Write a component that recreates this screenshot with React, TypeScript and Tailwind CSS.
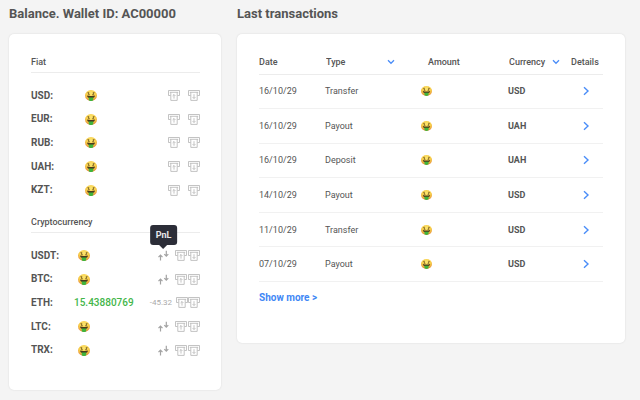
import React from "react";

type Transaction = {
  date: string;
  type: string;
  currency: string;
};

type CryptoBalance = {
  code: string;
  amount?: string;
  pnl?: string;
};

const fiat = ["USD", "EUR", "RUB", "UAH", "KZT"];

const crypto: CryptoBalance[] = [
  { code: "USDT" },
  { code: "BTC" },
  { code: "ETH", amount: "15.43880769", pnl: "-45.32" },
  { code: "LTC" },
  { code: "TRX" },
];

const transactions: Transaction[] = [
  { date: "16/10/29", type: "Transfer", currency: "USD" },
  { date: "16/10/29", type: "Payout", currency: "UAH" },
  { date: "16/10/29", type: "Deposit", currency: "UAH" },
  { date: "14/10/29", type: "Payout", currency: "USD" },
  { date: "11/10/29", type: "Transfer", currency: "USD" },
  { date: "07/10/29", type: "Payout", currency: "USD" },
];

function MoneyFace({ className }: { className: string }) {
  return (
    <svg viewBox="0 0 24 22" preserveAspectRatio="none" className={className} role="img" aria-label="Hidden amount">
      <defs>
        <radialGradient id="face" cx="0.5" cy="0.3" r="0.7">
          <stop offset="0" stopColor="#fbe672" />
          <stop offset="0.6" stopColor="#f7cb45" />
          <stop offset="1" stopColor="#e58a3c" />
        </radialGradient>
      </defs>
      <ellipse cx="12" cy="11" rx="12" ry="10.800" fill="url(#face)" />
      <path d="M5.500 4.500c0 3.500 3.500 2.500 3.500 6M7.300 4v7" fill="none" stroke="#7d6526" strokeWidth="1.600" />
      <path d="M18.500 4.500c0 3.500-3.500 2.500-3.500 6M16.700 4v7" fill="none" stroke="#7d6526" strokeWidth="1.600" />
      <path d="M4 11c4 1.500 12 1.500 16 0 0 3-2.500 5.500-8 5.500S4 14 4 11z" fill="#4a3a1c" />
      <path d="M7.500 15h9v4.500c0 1.700-2 2.500-4.500 2.500s-4.500-.8-4.500-2.500z" fill="#3fb43c" />
    </svg>
  );
}

function CashIcon({ direction }: { direction: "up" | "down" }) {
  return (
    <svg viewBox="0 0 12 11" className="h-[11px] w-3" fill="none" stroke="#b4b4b4" strokeWidth="0.800">
      <path d="M2.500 5.500H.5v-5h11v5h-2" />
      <path d="M1.800 2.300h8.400" />
      <path d="M2.800 2.300v8.100h6.400V2.300" />
      {direction === "up" ? <path d="M6 8.600V4.600M4.600 5.900 6 4.500l1.400 1.400" /> : <path d="M6 4.200v4.200M4.600 7.100 6 8.500l1.400-1.400" />}
    </svg>
  );
}

function CashButton({ direction, code }: { direction: "up" | "down"; code: string }) {
  return (
    <button type="button" aria-label={`${direction === "up" ? "Withdraw" : "Deposit"} ${code}`} className="shrink-0">
      <CashIcon direction={direction} />
    </button>
  );
}

function PnlIcon() {
  return (
    <svg viewBox="0 0 11 11" className="size-[11px]" fill="none" stroke="#a3a3a3" strokeWidth="1.200">
      <path d="M2.500 10.500V5.300M.5 7.200l2-2 2 2" />
      <path d="M8.300 .8V6M6.300 4.100l2 2 2-2" />
    </svg>
  );
}

function Chevron() {
  return (
    <svg viewBox="0 0 8 6" className="pointer-events-none h-1.5 w-2 shrink-0" fill="none" stroke="#4a8df8" strokeWidth="1.300">
      <path d="M1 1.300 4 4.300l3-3" />
    </svg>
  );
}

function FilterSelect({ label }: { label: string }) {
  return (
    <span className="flex items-center">
      <select aria-label={label} className="-mr-2 w-full min-w-0 cursor-pointer appearance-none bg-transparent font-medium outline-none">
        <option>{label}</option>
      </select>
      <Chevron />
    </span>
  );
}

function BalanceSection({ title, children }: { title: string; children: React.ReactNode }) {
  return (
    <section>
      <h2 className="h-[17px] border-b border-[#ececec] text-[9px] leading-3 font-medium">{title}</h2>
      <ul className="mt-[11px] grid h-[118px] auto-rows-fr items-center">{children}</ul>
    </section>
  );
}

export default function App() {
  return (
    <main className="grid min-h-screen grid-cols-[212px_1fr] items-start gap-4 bg-[#f4f4f4] pt-1.5 pr-[15px] pb-2 pl-[9px] font-['Roboto',sans-serif] text-[#555]">
      <div>
        <h1 className="text-[13px] leading-4 font-bold whitespace-nowrap">Balance. Wallet ID: AC00000</h1>
        <div className="mt-3 flex flex-col gap-[14px] rounded-[5px] bg-white pt-[22px] pr-[21px] pb-7 pl-[22px] shadow-[0_0_2px_rgba(0,0,0,0.12)]">
          <BalanceSection title="Fiat">
            {fiat.map((code) => (
              <li key={code} className="flex items-center">
                <span className="w-[54px] text-[10px] leading-3 font-bold">{code}:</span>
                <MoneyFace className="h-[11px] w-3" />
                <span className="ml-auto flex gap-2">
                  <CashButton direction="up" code={code} />
                  <CashButton direction="down" code={code} />
                </span>
              </li>
            ))}
          </BalanceSection>
          <BalanceSection title="Cryptocurrency">
            {crypto.map(({ code, amount, pnl }, i) => (
              <li key={code} className="flex items-center">
                <span className="w-[43px] text-[10px] leading-3 font-bold">{code}:</span>
                {amount ? (
                  <span className="text-[10px] leading-3 font-medium text-[#43b649]">{amount}</span>
                ) : (
                  <MoneyFace className="ml-1 h-[11px] w-3" />
                )}
                <span className="ml-auto flex items-center">
                  {pnl ? (
                    <span className="mr-1 text-[8px] leading-3 text-[#aaa]">{pnl}</span>
                  ) : (
                    <button type="button" aria-label={`PnL ${code}`} className="relative mr-1.5">
                      <PnlIcon />
                      {i === 0 && (
                        <span
                          role="tooltip"
                          className="absolute bottom-full left-1/2 mb-[5px] -translate-x-1/2 rounded-[3px] bg-[#2c2e38] px-1.5 py-1 text-[9px] leading-3 font-bold text-[#e8e8ea]"
                        >
                          PnL
                          <span className="absolute top-full left-1/2 -translate-x-1/2 border-x-4 border-t-4 border-x-transparent border-t-[#2c2e38]" />
                        </span>
                      )}
                    </button>
                  )}
                  <span className={pnl ? "flex" : "flex gap-px"}>
                    <CashButton direction="up" code={code} />
                    <CashButton direction="down" code={code} />
                  </span>
                </span>
              </li>
            ))}
          </BalanceSection>
        </div>
      </div>

      <div>
        <h1 className="text-[13px] leading-4 font-bold whitespace-nowrap">Last transactions</h1>
        <div className="mt-3 rounded-[5px] bg-white px-[22px] pt-3 pb-[38px] shadow-[0_0_2px_rgba(0,0,0,0.12)]">
          <table className="h-[236px] w-full table-fixed text-left text-[9px] leading-3">
            <colgroup>
              <col className="w-[66px]" />
              <col />
              <col className="w-[87px]" />
              <col className="w-[60px]" />
              <col className="w-[35px]" />
            </colgroup>
            <thead>
              <tr className="h-7 border-b border-[#ececec] align-bottom">
                <th className="p-0 pb-1.5 font-medium">Date</th>
                <th className="p-0 pr-[26px] pb-1.5 pl-px font-medium">
                  <FilterSelect label="Type" />
                </th>
                <th className="p-0 pb-1.5 pl-[7px] font-medium">Amount</th>
                <th className="p-0 pr-2 pb-1.5 pl-px font-medium">
                  <FilterSelect label="Currency" />
                </th>
                <th className="p-0 pb-1.5 pl-[3px] font-medium">Details</th>
              </tr>
            </thead>
            <tbody>
              {transactions.map((t, i) => (
                <tr key={i} className="border-b border-[#f1f1f1]">
                  <td className="p-0">{t.date}</td>
                  <td className="p-0">{t.type}</td>
                  <td className="p-0">
                    <MoneyFace className="h-2.5 w-[11px]" />
                  </td>
                  <td className="p-0 font-bold">{t.currency}</td>
                  <td className="p-0">
                    <a href="#details" aria-label={`Details of ${t.type} ${t.date}`} className="mx-auto block w-2">
                      <svg viewBox="0 0 8 10" className="h-2.5 w-2" fill="none" stroke="#4a8df8" strokeWidth="1.400">
                        <path d="M2 1.200 6 5 2 8.800" />
                      </svg>
                    </a>
                  </td>
                </tr>
              ))}
            </tbody>
          </table>
          <a href="#more" className="mt-[9px] block text-[10px] leading-[14px] font-bold text-[#3f87f5]">
            Show more &gt;
          </a>
        </div>
      </div>
    </main>
  );
}
